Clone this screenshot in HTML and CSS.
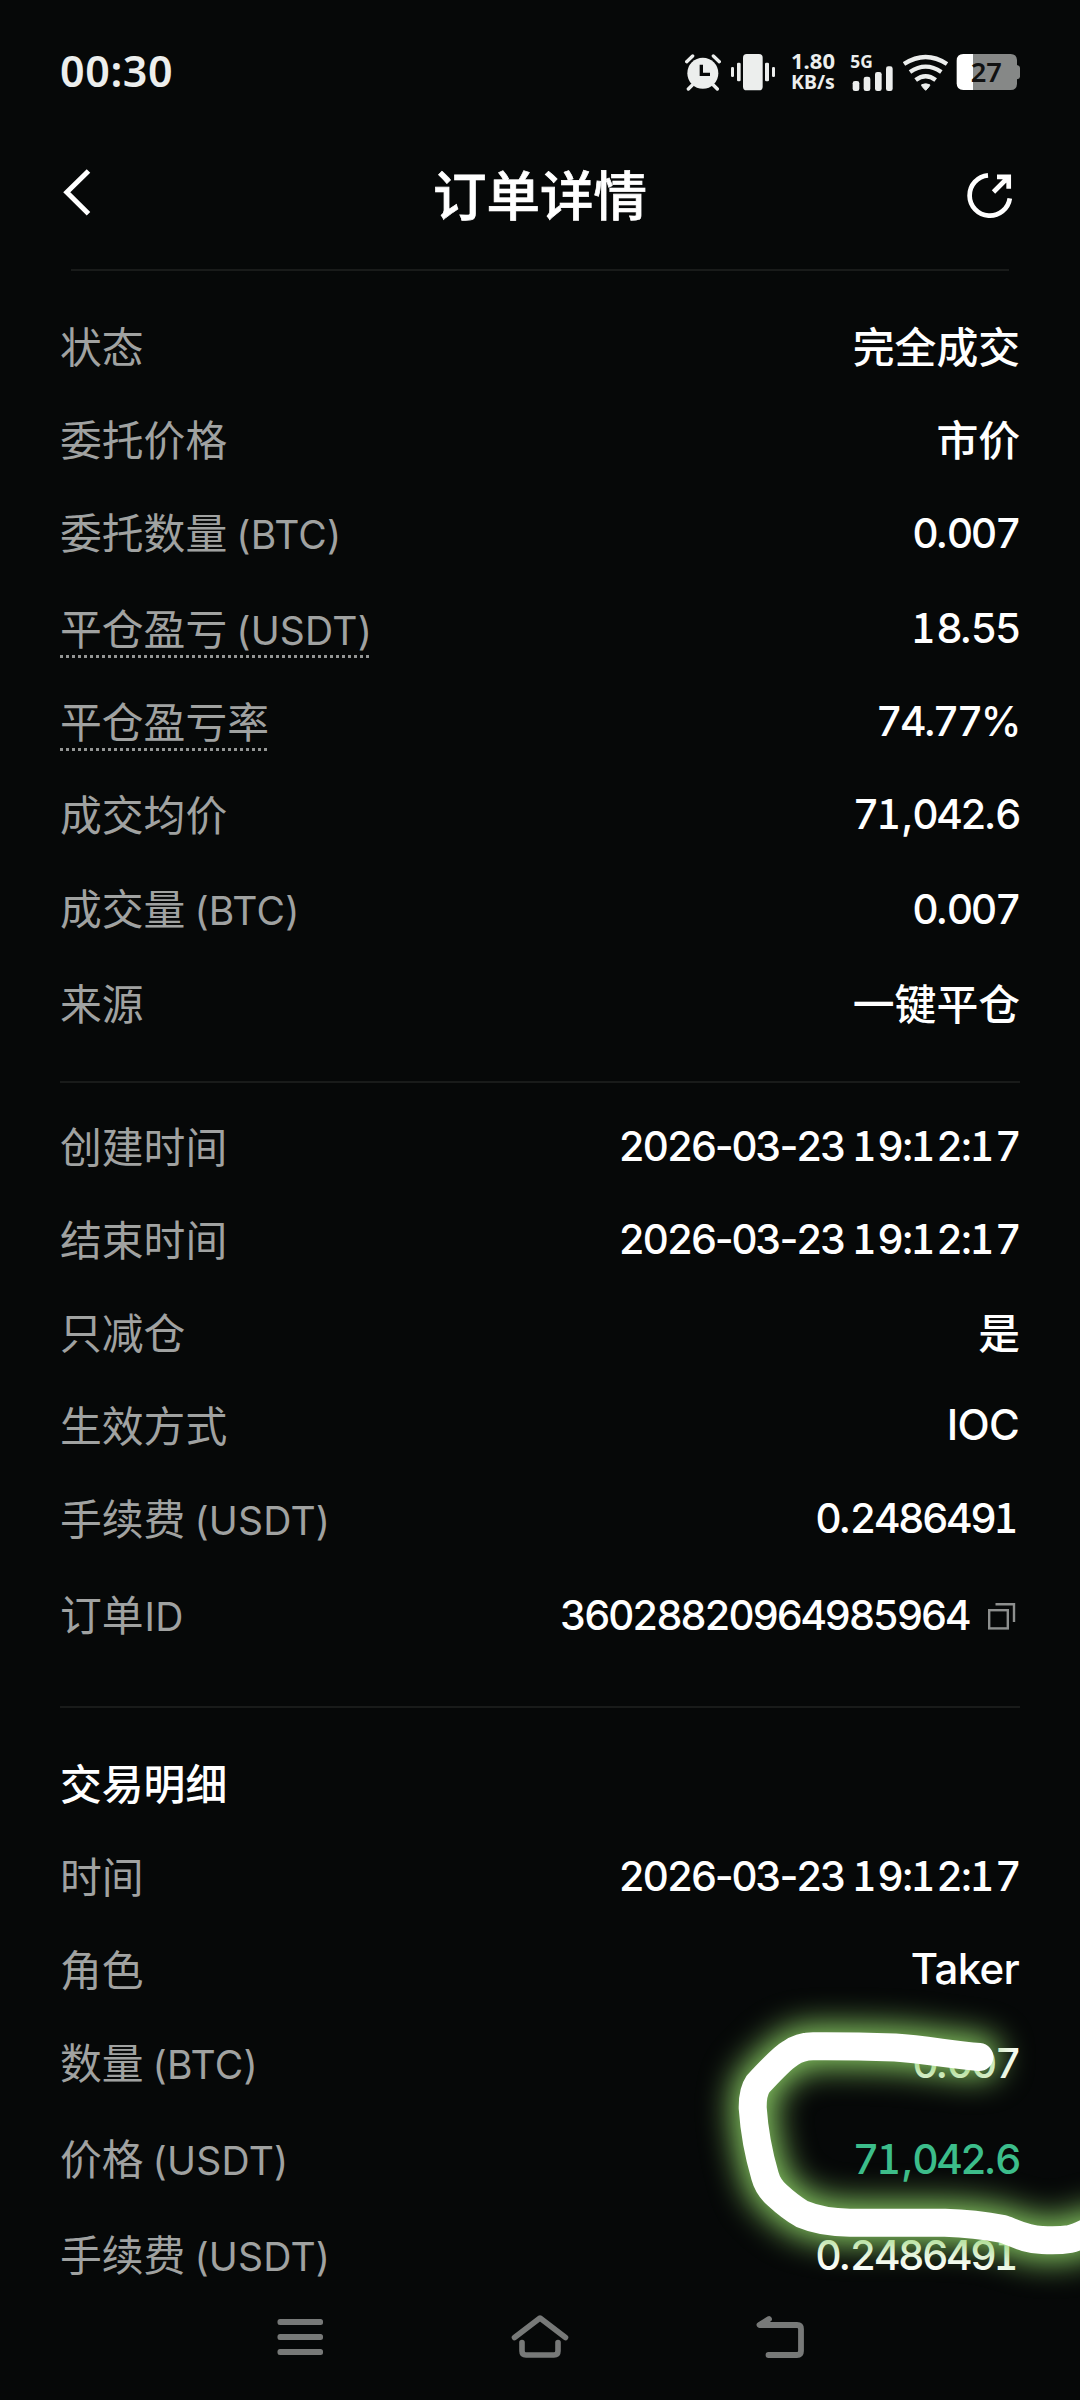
FILE: index.html
```html
<!DOCTYPE html>
<html lang="zh-CN">
<head>
<meta charset="utf-8">
<title>订单详情</title>
<link rel="stylesheet" href="styles.css">
</head>
<body>
<div class="screen">
  <div class="status">
    <span class="clock">00:30</span>
    <div class="status-icons">
      <svg class="ic-alarm" width="36" height="40" viewBox="75 60 108 120">
        <circle cx="128.500" cy="127" r="46.500" fill="#eceeed"/>
        <path d="M80 92L98 75M178 92L160 75M85 174L97 162M172 174L160 162" fill="none" stroke="#eceeed" stroke-width="10" stroke-linecap="round"/>
        <path d="M124 101V130H150" fill="none" stroke="#060808" stroke-width="10"/>
      </svg>
      <svg class="ic-vibrate" width="46" height="40" viewBox="210 60 138 120" fill="#eceeed">
        <rect x="249" y="69" width="59" height="109" rx="11"/>
        <rect x="231" y="95" width="11" height="56" rx="4"/><rect x="315" y="95" width="12" height="56" rx="4"/>
        <rect x="213" y="108" width="9" height="30" rx="4"/><rect x="336" y="108" width="9" height="30" rx="4"/>
      </svg>
      <div class="speed"><span>1.80</span><span class="speed-unit">KB/s</span></div>
      <svg class="ic-signal" width="44" height="40" viewBox="570 60 132 120" fill="#eceeed">
        <text x="571" y="112" class="net">5G</text>
        <rect x="578" y="150" width="20" height="30" rx="7"/><rect x="611" y="137" width="20" height="43" rx="7"/>
        <rect x="645" y="123" width="20" height="57" rx="7"/><rect x="678" y="106" width="20" height="74" rx="7"/>
      </svg>
      <svg class="ic-wifi" width="46" height="40" viewBox="729 60 138 120" fill="none" stroke="#eceeed" stroke-width="13">
        <path d="M732 99Q797 57 861 99M750 123Q797 91 844 123M767 147Q797 124 827 147"/>
        <path d="M785 161Q797 156 809 161Q812 163 797 178Q782 163 785 161Z" fill="#eceeed" stroke-width="3" stroke-linejoin="round"/>
      </svg>
      <svg width="65" height="40" viewBox="888 60 195 120">
        <path d="M938 69H1052Q1070 69 1071 87V102Q1080 104 1080 110V137Q1080 143 1071 145V159Q1070 177 1052 177H938Z" fill="#868887"/>
        <path d="M939 69H910Q890 69 890 89V157Q890 177 910 177H939Z" fill="#fff"/>
        <text x="932" y="152" class="charge">27</text>
      </svg>
    </div>
  </div>

  <header class="header">
    <svg width="60" height="60" viewBox="60 162 60 60" fill="none" stroke="#fff" stroke-width="5"><path d="M88.500 171L66.800 192.300L88.500 213.700"/></svg>
    <h1 class="title">订单详情</h1>
    <svg width="60" height="60" viewBox="960 162 60 60" fill="none" stroke="#fff" stroke-width="4.700"><path d="M988 175.300A20.200 20.200 0 1 0 1009.800 198.300"/><path d="M993.500 192L1008.500 177M997 176.800H1008.700V188.700"/></svg>
  </header>
  <hr class="rule rule-top">

  <section class="list list-order">
    <div class="row"><span class="label">状态</span><span class="value han">完全成交</span></div>
    <div class="row"><span class="label">委托价格</span><span class="value han">市价</span></div>
    <div class="row"><span class="label">委托数量<span class="unit">(BTC)</span></span><span class="value">0<span class="point">.</span>007</span></div>
    <div class="row gap-l"><span class="label hint">平仓盈亏<span class="unit">(USDT)</span></span><span class="value up"><span class="one">1</span>8<span class="point">.</span>55</span></div>
    <div class="row"><span class="label hint">平仓盈亏率</span><span class="value up">74.77%</span></div>
    <div class="row"><span class="label">成交均价</span><span class="value up">7<span class="one">1</span><span class="point">,</span>042<span class="point">.</span>6</span></div>
    <div class="row gap-s"><span class="label">成交量<span class="unit">(BTC)</span></span><span class="value">0<span class="point">.</span>007</span></div>
    <div class="row gap-m"><span class="label">来源</span><span class="value han">一键平仓</span></div>
  </section>
  <hr class="rule">

  <section class="list list-time">
    <div class="row"><span class="label">创建时间</span><span class="value up">2026<span class="sep">-</span>03<span class="sep">-</span>23 <span class="one">1</span>9<span class="sep">:</span><span class="one">1</span>2<span class="sep">:</span><span class="one">1</span>7</span></div>
    <div class="row"><span class="label">结束时间</span><span class="value up">2026<span class="sep">-</span>03<span class="sep">-</span>23 <span class="one">1</span>9<span class="sep">:</span><span class="one">1</span>2<span class="sep">:</span><span class="one">1</span>7</span></div>
    <div class="row"><span class="label">只减仓</span><span class="value han">是</span></div>
    <div class="row"><span class="label">生效方式</span><span class="value latin up">IOC</span></div>
    <div class="row"><span class="label">手续费<span class="unit">(USDT)</span></span><span class="value up">0<span class="point">.</span>248649<span class="one">1</span></span></div>
    <div class="row gap-l"><span class="label">订单<span class="unit tight">ID</span></span><span class="value id">36028820964985964<svg class="copy" width="30" height="30" viewBox="0 0 30 30" fill="none" stroke="#8d8f8e" stroke-width="2.400"><rect x="1.200" y="8.200" width="18.600" height="18.200"/><path d="M7.500 2.200H26V20"/></svg></span></div>
  </section>
  <hr class="rule">

  <section class="list list-trade">
    <div class="row"><h2 class="subtitle">交易明细</h2></div>
    <div class="row"><span class="label">时间</span><span class="value up">2026<span class="sep">-</span>03<span class="sep">-</span>23 <span class="one">1</span>9<span class="sep">:</span><span class="one">1</span>2<span class="sep">:</span><span class="one">1</span>7</span></div>
    <div class="row"><span class="label">角色</span><span class="value latin up">Taker</span></div>
    <div class="row"><span class="label">数量<span class="unit">(BTC)</span></span><span class="value">0<span class="point">.</span>007</span></div>
    <div class="row gap-l"><span class="label">价格<span class="unit">(USDT)</span></span><span class="value buy">7<span class="one">1</span><span class="point">,</span>042<span class="point">.</span>6</span></div>
    <div class="row gap-l"><span class="label">手续费<span class="unit">(USDT)</span></span><span class="value">0<span class="point">.</span>248649<span class="one">1</span></span></div>
  </section>

  <nav class="nav">
    <svg width="60" height="60" viewBox="270 2307 60 60" fill="#777978"><rect x="277.500" y="2319" width="45.500" height="6" rx="2.500"/><rect x="277.500" y="2334" width="45.500" height="6" rx="2.500"/><rect x="277.500" y="2349" width="45.500" height="6" rx="2.500"/></svg>
    <svg width="60" height="60" viewBox="510 2307 60 60" fill="none" stroke="#777978" stroke-width="5.600" stroke-linecap="round" stroke-linejoin="round"><path d="M514.500 2337.500L540 2318L565.500 2337.500M522 2342.500V2351Q522 2355 526 2355H554Q558 2355 558 2351V2342.500"/></svg>
    <svg width="60" height="60" viewBox="750 2307 60 60" fill="none" stroke="#777978" stroke-width="5.800" stroke-linecap="round" stroke-linejoin="round"><path d="M769 2319L759.500 2325H797Q801 2325 801 2329V2351Q801 2355 797 2355H768.500"/></svg>
  </nav>

  <svg class="marker" width="440" height="400" viewBox="640 1940 440 400" fill="none" stroke-linecap="round" stroke-linejoin="round">
    <defs>
      <filter id="glow" filterUnits="userSpaceOnUse" x="600" y="1900" width="600" height="500" color-interpolation-filters="sRGB"><feGaussianBlur stdDeviation="16"/></filter>
      <path id="stroke" d="M979.300 2057C950 2054.500 925 2049.500 895 2047.500Q850 2046 813 2046.300Q800 2046.300 790 2053.500Q782 2058 758 2084Q752.500 2092 752.700 2108Q755 2142 765 2176Q768 2187 777 2195Q790 2207 802 2214Q822 2222.500 850 2222.700H945Q975 2223.500 1003 2229C1015 2233 1025 2239.500 1042 2240Q1058 2241 1070 2239Q1078 2237 1096 2228"/>
    </defs>
    <use href="#stroke" stroke="#8ccf66" stroke-width="42" filter="url(#glow)"/>
    <use href="#stroke" stroke="#fff" stroke-width="28"/>
  </svg>
</div>
</body>
</html>
```
FILE: styles.css
```css
* { box-sizing: border-box; }
body { margin: 0; background: #060808; }

.screen {
  position: relative;
  width: 1080px;
  height: 2400px;
  overflow: hidden;
  background: #060808;
  color: #fff;
  font-family: Inter, "Noto Sans CJK SC", sans-serif;
  font-size: 42px;
  display: flex;
  flex-direction: column;
}
svg { display: block; flex: none; }

.status {
  height: 142px;
  padding: 0 59px 0 60px;
  display: flex;
  justify-content: space-between;
  align-items: center;
}
.clock {
  font: 600 43px/58px "Noto Sans", sans-serif;
  letter-spacing: 0.6px;
  color: #eceeed;
}
.status-icons { display: flex; align-items: center; height: 40px; }
.ic-alarm { margin-right: 9px; }
.ic-vibrate { margin-right: 13px; }
.ic-signal { margin-right: 9px; overflow: visible; }
.ic-wifi { margin-right: 7px; }
.speed {
  width: 48px;
  margin-right: 13px;
  display: flex;
  flex-direction: column;
  align-items: center;
  font: 700 22px/22px "Noto Sans", sans-serif;
  color: #eceeed;
}
.speed-unit { font-size: 19.5px; }
.net { font: 700 52px "Noto Sans", sans-serif; }
.charge { font: 600 82px "Noto Sans", sans-serif; fill: #111; }

.header {
  height: 127px;
  padding: 20px 60px 0;
  display: flex;
  align-items: flex-start;
  justify-content: space-between;
}
.title {
  margin: 0;
  font-size: 53.5px;
  font-weight: 500;
  line-height: 69px;
  -webkit-text-stroke: 0.7px #fff;
}

.rule { margin: 0 60px; border: 0; height: 2px; flex: none; background: #191b1a; }
.rule-top { margin: 0 71px; }

.list { padding: 0 60px; }
.list-order { padding-top: 30px; height: 810px; }
.list-time { padding-top: 18px; height: 623px; }
.list-trade { padding-top: 30px; height: 599px; }

.row {
  height: 93px;
  line-height: 93px;
  display: flex;
  justify-content: space-between;
}
.gap-s { margin-top: 1px; }
.gap-m { margin-top: 2px; }
.gap-l { margin-top: 3px; }

.label { color: #a0a2a1; font-weight: 400; font-size: 41.8px; line-height: 95px; }
.unit { font-size: 39px; letter-spacing: 0.2px; margin-left: 9px; }
.unit.tight { margin-left: 1px; }
.hint {
  background: repeating-linear-gradient(90deg, #949695 0 3px, transparent 3px 6px) 0 72px / 100% 3px no-repeat;
}
.value {
  font-size: 41px;
  font-weight: 500;
  font-feature-settings: "tnum";
  letter-spacing: -2.5px;
  margin-right: 1px;
}
/* footed figure one on the same advance as the other digits */
.one {
  font-family: "Noto Sans CJK SC", sans-serif;
  letter-spacing: 1.4px;
  line-height: 0;
}
.sep { font-feature-settings: normal; }
.point { letter-spacing: -0.5px; }
.value.up { line-height: 91px; }
.value.han { font-size: 41.8px; letter-spacing: 0; line-height: 95px; margin-right: 0; }
.value.latin { font-size: 42px; letter-spacing: -0.7px; line-height: 90px; }
.buy { color: #3cbd8b; }
.value.id { display: flex; align-items: center; line-height: 91px; margin-right: 0; }
.copy { margin: 3px 2px 0 19px; }
.subtitle { margin: 0; font-size: 41.8px; font-weight: 500; line-height: 95px; }

.nav {
  padding: 0 270px;
  display: flex;
  justify-content: space-between;
}

.marker { position: absolute; left: 640px; top: 1940px; }
```
